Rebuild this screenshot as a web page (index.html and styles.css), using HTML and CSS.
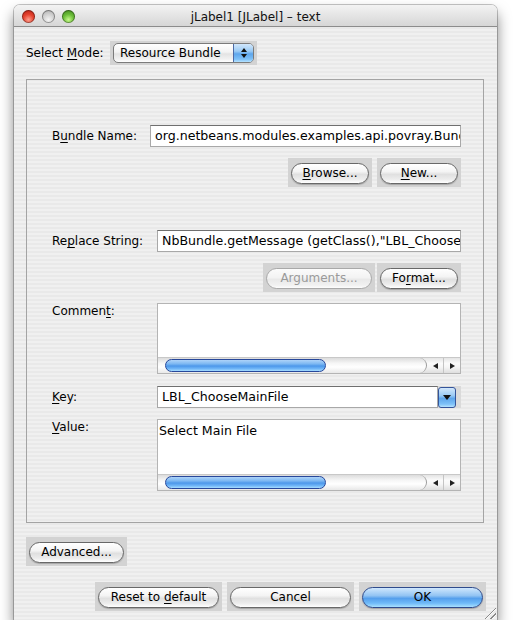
FILE: index.html
```html
<!DOCTYPE html>
<html>
<head>
<meta charset="utf-8">
<title>jLabel1 [JLabel] – text</title>
<link rel="stylesheet" href="styles.css">
</head>
<body>
<div class="window">
  <div class="titlebar">
    <div class="lights"><span class="light red"></span><span class="light gray"></span><span class="light green"></span></div>
    <div class="title">jLabel1 [JLabel] – text</div>
    <div></div>
  </div>
  <div class="content">
    <div class="mode-row">
      <span class="mode-label">Select <u>M</u>ode:</span>
      <div class="combo-box">
        <div class="popup">
          <span class="popup-text">Resource Bundle</span>
          <span class="stepper"><i class="tri-up"></i><i class="tri-down"></i></span>
        </div>
      </div>
    </div>

    <div class="panel">
      <div class="row r-field r-first">
        <span class="lbl lbl-narrow">B<u>u</u>ndle Name:</span>
        <div class="field">org.netbeans.modules.examples.api.povray.Bundle</div>
      </div>
      <div class="btn-row">
        <div class="hl w84"><div class="btn"><span><u>B</u>rowse...</span></div></div>
        <div class="hl w84"><div class="btn"><span><u>N</u>ew...</span></div></div>
      </div>

      <div class="row r-field r-replace">
        <span class="lbl">Re<u>p</u>lace String:</span>
        <div class="field">NbBundle.getMessage (getClass(),"LBL_ChooseMainFile")</div>
      </div>
      <div class="btn-row args-row">
        <div class="hl w112"><div class="btn disabled"><span>Arguments...</span></div></div>
        <div class="hl w84"><div class="btn"><span>Fo<u>r</u>mat...</span></div></div>
      </div>

      <div class="row r-area r-comment">
        <span class="lbl lbl-top">Commen<u>t</u>:</span>
        <div class="area">
          <div class="area-text"></div>
          <div class="hscroll">
            <div class="track"><div class="thumb"></div></div>
            <div class="arrows"><span class="arr"><i class="tri-left"></i></span><span class="arr"><i class="tri-right"></i></span></div>
          </div>
        </div>
      </div>

      <div class="row r-field r-key">
        <span class="lbl"><u>K</u>ey:</span>
        <div class="key-combo">
          <div class="key-field">LBL_ChooseMainFile</div>
          <div class="key-arrow"><i class="tri-down big"></i></div>
        </div>
      </div>

      <div class="row r-area r-value">
        <span class="lbl lbl-top"><u>V</u>alue:</span>
        <div class="area">
          <div class="area-text">Select Main File</div>
          <div class="hscroll">
            <div class="track"><div class="thumb"></div></div>
            <div class="arrows"><span class="arr"><i class="tri-left"></i></span><span class="arr"><i class="tri-right"></i></span></div>
          </div>
        </div>
      </div>
    </div>

    <div class="adv-row">
      <div class="hl w101"><div class="btn"><span>Advanced...</span></div></div>
    </div>

    <div class="bottom-row">
      <div class="hl w127"><div class="btn"><span>Reset to <u>d</u>efault</span></div></div>
      <div class="hl w127"><div class="btn"><span>Cancel</span></div></div>
      <div class="hl w127"><div class="btn default"><span>OK</span></div></div>
    </div>
  </div>
  <div class="grip"></div>
</div>
</body>
</html>
```

FILE: styles.css
```css
* { box-sizing: border-box; }
html, body { margin: 0; padding: 0; background: #fff; }
body {
  font-family: "DejaVu Sans", "Liberation Sans", sans-serif;
  font-size: 12px;
  color: #000;
}
u { text-decoration: underline; text-underline-offset: 2px; }

.window {
  position: relative;
  margin: 5px 0 0 14px;
  width: 483px;
  height: 615px;
  border-radius: 6px 6px 0 0;
  overflow: hidden;
  background: repeating-linear-gradient(to bottom, #f0f0f0 0, #f0f0f0 2px, #e9e9e9 2px, #e9e9e9 4px);
  box-shadow: 0 8px 14px rgba(0,0,0,0.5), 0 0 0 1px rgba(0,0,0,0.22);
}

.titlebar {
  height: 22px;
  display: grid;
  grid-template-columns: 1fr auto 1fr;
  align-items: center;
  background: linear-gradient(#f3f3f3, #d6d6d6);
  border-bottom: 1px solid #8c8c8c;
}
.lights { display: flex; gap: 7px; padding-left: 8px; padding-top: 2px; }
.light {
  width: 13px; height: 13px; border-radius: 50%;
  box-shadow: inset 0 0 0 1px rgba(0,0,0,0.35);
}
.red { background: radial-gradient(circle at 50% 75%, #ff9d8c 0, #e5432f 45%, #b01a0f 100%); }
.gray { background: radial-gradient(circle at 50% 75%, #f4f4f4 0, #cfcfcf 50%, #a5a5a5 100%); }
.green { background: radial-gradient(circle at 50% 75%, #c6f98a 0, #6cbe39 45%, #3a7e17 100%); }
.title { font-size: 12px; color: #111; padding-top: 3px; white-space: nowrap; }

.content { padding: 14px 11px 0 12px; }

.mode-row { display: flex; align-items: center; height: 24px; }
.mode-label { width: 84px; flex: none; }
.combo-box { width: 147px; height: 24px; padding: 2px 3px; background: #d3d3d3; }
.popup {
  height: 20px;
  display: flex;
  align-items: stretch;
  border: 1px solid #7b7b7b;
  border-radius: 5px;
  background: linear-gradient(#ffffff 0%, #f3f3f3 45%, #e3e3e3 55%, #f2f2f2 85%, #ffffff 100%);
  overflow: hidden;
}
.popup-text { flex: 1; padding-left: 6px; line-height: 18px; }
.stepper {
  width: 20px;
  border-left: 1px solid #4d6aa5;
  background: linear-gradient(#d2e7fb 0%, #9acaf4 40%, #5ea6ec 55%, #7ec1f8 85%, #b7e3ff 100%);
  display: flex; flex-direction: column; align-items: center; justify-content: center; gap: 2px;
}
i { display: block; width: 0; height: 0; }
.tri-up { border-left: 3px solid transparent; border-right: 3px solid transparent; border-bottom: 4px solid #111; }
.tri-down { border-left: 3px solid transparent; border-right: 3px solid transparent; border-top: 4px solid #111; }
.tri-down.big { border-left-width: 4px; border-right-width: 4px; border-top-width: 5px; }
.tri-left { border-top: 3px solid transparent; border-bottom: 3px solid transparent; border-right: 5px solid #222; }
.tri-right { border-top: 3px solid transparent; border-bottom: 3px solid transparent; border-left: 5px solid #222; }

.panel {
  margin-top: 14px;
  width: 458px;
  height: 444px;
  border: 1px solid #a4a4a4;
  padding: 0 22px 0 25px;
  display: flex;
  flex-direction: column;
}
.row { display: flex; }
.r-field { height: 22px; align-items: center; }
.r-first { margin-top: 45px; }
.r-replace { margin-top: 43px; }
.r-key { margin-top: 12px; }
.r-area { height: 71px; align-items: flex-start; }
.r-comment { margin-top: 11px; }
.r-value { margin-top: 11px; height: 72px; }
.lbl { width: 105px; flex: none; white-space: nowrap; }
.lbl-narrow { width: 98px; }
.lbl-top { padding-top: 1px; }

.field {
  flex: 1;
  min-width: 0;
  height: 22px;
  background: #fff;
  border: 1px solid #a8a8a8;
  border-top-color: #6f6f6f;
  padding: 0 4px;
  font-size: 12.6px;
  line-height: 20px;
  white-space: nowrap;
  overflow: hidden;
}

.btn-row { display: flex; justify-content: flex-end; gap: 5px; height: 29px; margin-top: 11px; }
.args-row { gap: 2px; }
.hl { background: #d3d3d3; padding: 5px 3px 3px; height: 29px; }
.w84 { width: 84px; }
.w101 { width: 101px; }
.w112 { width: 112px; }
.w127 { width: 127px; }
.btn {
  height: 21px;
  border: 1px solid #686868;
  border-radius: 11px;
  background: linear-gradient(#ffffff 0%, #f4f4f4 40%, #e0e0e0 55%, #ececec 80%, #ffffff 100%);
  box-shadow: 0 1px 1px rgba(0,0,0,0.22);
  display: flex;
  align-items: center;
  justify-content: center;
  white-space: nowrap;
  line-height: 19px;
}
.btn.disabled { border-color: #a9a9a9; color: #9a9a9a; box-shadow: none; background: linear-gradient(#fbfbfb 0%, #f3f3f3 45%, #e9e9e9 55%, #f1f1f1 85%, #fdfdfd 100%); }
.btn.default {
  border-color: #2f4b8c;
  background: linear-gradient(#cfe7fd 0%, #93c4f3 40%, #559fec 55%, #6fbaf8 80%, #a8e0ff 100%);
}

.area {
  flex: 1;
  height: 100%;
  border: 1px solid #b4b4b4;
  background: #fff;
  display: flex;
  flex-direction: column;
}
.area-text { flex: 1; padding: 3px 1px; font-size: 12.6px; }
.hscroll {
  height: 16px;
  display: flex;
  border-top: 1px solid #c8c8c8;
  background: linear-gradient(#e4e4e4 0%, #fbfbfb 35%, #f6f6f6 60%, #dedede 100%);
}
.track {
  flex: 1;
  padding: 1px 0 0 7px;
  border-right: 1px solid #9d9d9d;
  border-radius: 0 8px 8px 0;
  background: linear-gradient(#dcdcdc 0%, #f6f6f6 35%, #ffffff 60%, #e8e8e8 100%);
}
.thumb {
  width: 161px;
  height: 13px;
  border: 1px solid #27479a;
  border-radius: 7px;
  background: linear-gradient(#aed3f8 0%, #7db8f2 35%, #4c97ea 55%, #71b7f8 80%, #a6dcff 100%);
}
.arrows { width: 33px; display: flex; }
.arr { flex: 1; display: flex; align-items: center; justify-content: center; }
.arr + .arr { border-left: 1px solid #c4c4c4; }

.key-combo { flex: 1; height: 22px; display: flex; background: #dadada; }
.key-field {
  flex: 1;
  background: #fff;
  border: 1px solid #a8a8a8;
  border-top-color: #6f6f6f;
  padding: 0 4px;
  font-size: 12.6px;
  line-height: 20px;
  white-space: nowrap;
}
.key-arrow {
  width: 18px;
  height: 21px;
  margin: 1px 5px 0 0;
  border: 1px solid #34549a;
  border-radius: 3px;
  background: linear-gradient(#d2e7fb 0%, #9acaf4 40%, #5ea6ec 55%, #7ec1f8 85%, #b7e3ff 100%);
  display: flex; align-items: center; justify-content: center;
}

.adv-row { margin-top: 14px; display: flex; }
.bottom-row { margin-top: 16px; display: flex; justify-content: flex-end; gap: 5px; }

.grip {
  position: absolute;
  right: 1px;
  bottom: 1px;
  width: 13px;
  height: 13px;
  background: repeating-linear-gradient(135deg, transparent 0, transparent 2px, #8a8a8a 2px, #8a8a8a 3px, #fafafa 3px, #fafafa 4px);
  clip-path: polygon(100% 0, 100% 100%, 0 100%);
}
```
